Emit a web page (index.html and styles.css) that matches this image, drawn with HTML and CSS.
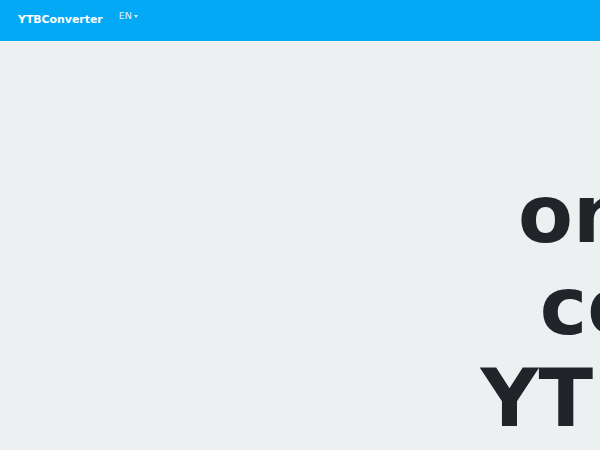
FILE: index.html
```html
<!DOCTYPE html>
<html lang="en">
<head>
<meta charset="utf-8">
<title>YTBConverter</title>
<link rel="stylesheet" href="styles.css">
</head>
<body>
<header class="topbar">
  <a class="brand" href="#">YTBConverter</a>
  <div class="lang">EN<span class="caret"></span></div>
</header>
<main class="hero">
  <div class="hero-spacer"></div>
  <h1 class="hero-title">
    <span class="line">online</span>
    <span class="line">coins</span>
    <span class="line">YTB pro</span>
  </h1>
</main>
</body>
</html>
```
FILE: styles.css
```css
html, body {
  margin: 0;
  padding: 0;
}
body {
  background: #ecf0f1;
  font-family: "DejaVu Sans", sans-serif;
  color: #212529;
  overflow: hidden;
  width: 600px;
  height: 450px;
}
.topbar {
  height: 41px;
  box-sizing: border-box;
  background: #03a9f4;
  display: flex;
  align-items: flex-start;
  padding: 11px 0 0 18px;
  gap: 16px;
}
.brand {
  color: #ffffff;
  font-weight: bold;
  font-size: 10.9px;
  text-decoration: none;
  margin-top: 3px;
  line-height: 12px;
}
.lang {
  color: rgba(255,255,255,0.88);
  font-size: 9.5px;
  line-height: 10px;
  display: flex;
  align-items: center;
}
.caret {
  display: inline-block;
  margin-left: 2px;
  border-left: 2.5px solid transparent;
  border-right: 2.5px solid transparent;
  border-top: 3px solid rgba(255,255,255,0.88);
}
.hero {
  display: flex;
  padding-top: 128px;
}
.hero-spacer {
  flex: 0 0 300px;
}
.hero-title {
  flex: 0 0 714px;
  margin: 0;
  font-size: 80px;
  line-height: 92px;
  font-weight: bold;
  text-align: center;
  white-space: nowrap;
}
.line {
  display: block;
}
```
